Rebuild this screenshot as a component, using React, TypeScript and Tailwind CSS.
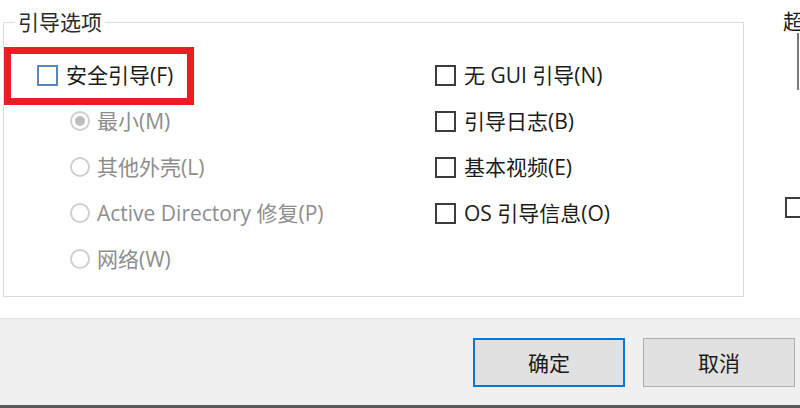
import React from "react";

const font = { fontFamily: '"Open Sans", "Noto Sans CJK SC", "Microsoft YaHei", sans-serif' };

function Box({ blue }: { blue?: boolean }) {
  return (
    <span
      className={
        "block w-[21px] h-[21px] shrink-0 border-2 bg-white " +
        (blue ? "border-[#5a87b4]" : "border-[#3c3c3c]")
      }
    />
  );
}

function Radio({ checked }: { checked?: boolean }) {
  return (
    <span className="flex items-center justify-center w-[20px] h-[20px] shrink-0 rounded-full border-2 border-[#cfcfcf] bg-white">
      {checked && <span className="block w-[10px] h-[10px] rounded-full bg-[#bdbdbd]" />}
    </span>
  );
}

function CheckRow({ label, blue }: { label: string; blue?: boolean }) {
  return (
    <div className="flex items-center h-[46px] gap-[8px] text-[#1b1b1b]">
      <Box blue={blue} />
      <span className="whitespace-nowrap">{label}</span>
    </div>
  );
}

function RadioRow({ label, checked }: { label: string; checked?: boolean }) {
  return (
    <div className="flex items-center h-[46px] gap-[7px] pl-[33px] text-[#8d8d8d]">
      <Radio checked={checked} />
      <span className="whitespace-nowrap">{label}</span>
    </div>
  );
}

export default function App() {
  return (
    <div className="w-[800px] h-[408px] bg-white flex flex-col overflow-hidden text-[21px] leading-[24px]" style={font}>
      <div className="relative flex h-[318px]">
        <fieldset className="ml-[3px] mt-[10px] w-[741px] h-[287px] border border-[#dcdcdc] px-0 pb-0 pt-[18px]">
          <legend className="ml-[11px] px-[3px] text-[#2a2a2a]">引导选项</legend>
          <div className="flex">
            <div className="flex flex-col pl-[33px] w-[431px]">
              <CheckRow label="安全引导(F)" blue />
              <RadioRow label="最小(M)" checked />
              <RadioRow label="其他外壳(L)" />
              <RadioRow label="Active Directory 修复(P)" />
              <RadioRow label="网络(W)" />
            </div>
            <div className="flex flex-col">
              <CheckRow label="无 GUI 引导(N)" />
              <CheckRow label="引导日志(B)" />
              <CheckRow label="基本视频(E)" />
              <CheckRow label="OS 引导信息(O)" />
            </div>
          </div>
        </fieldset>
        <div className="flex-1 overflow-hidden pl-[39px] pt-[9px] flex flex-col">
          <span className="whitespace-nowrap text-[#1b1b1b]">超时(T):</span>
          <div className="ml-[14px] w-[80px] h-[57px] border-l-2 border-[#7a7a7a] shrink-0" />
          <div className="ml-[2px] mt-[107px] flex items-center gap-[8px]">
            <Box />
          </div>
        </div>
        <div className="absolute left-[4px] top-[47px] w-[190px] h-[58px] border-[7px] border-[#ea1c24]" />
      </div>
      <div className="h-px bg-[#dfdfdf]" />
      <div className="flex-1 bg-[#f0f0f0] flex justify-end items-start pt-[19px] pr-[5px] gap-[18px]">
        <button className="w-[152px] h-[49px] border-2 border-[#0078d7] bg-[#e1e1e1] text-[#1b1b1b]">确定</button>
        <button className="w-[152px] h-[49px] border border-[#adadad] bg-[#e1e1e1] text-[#1b1b1b]">取消</button>
      </div>
      <div className="h-[3px] bg-[#5a5a5a]" />
    </div>
  );
}
